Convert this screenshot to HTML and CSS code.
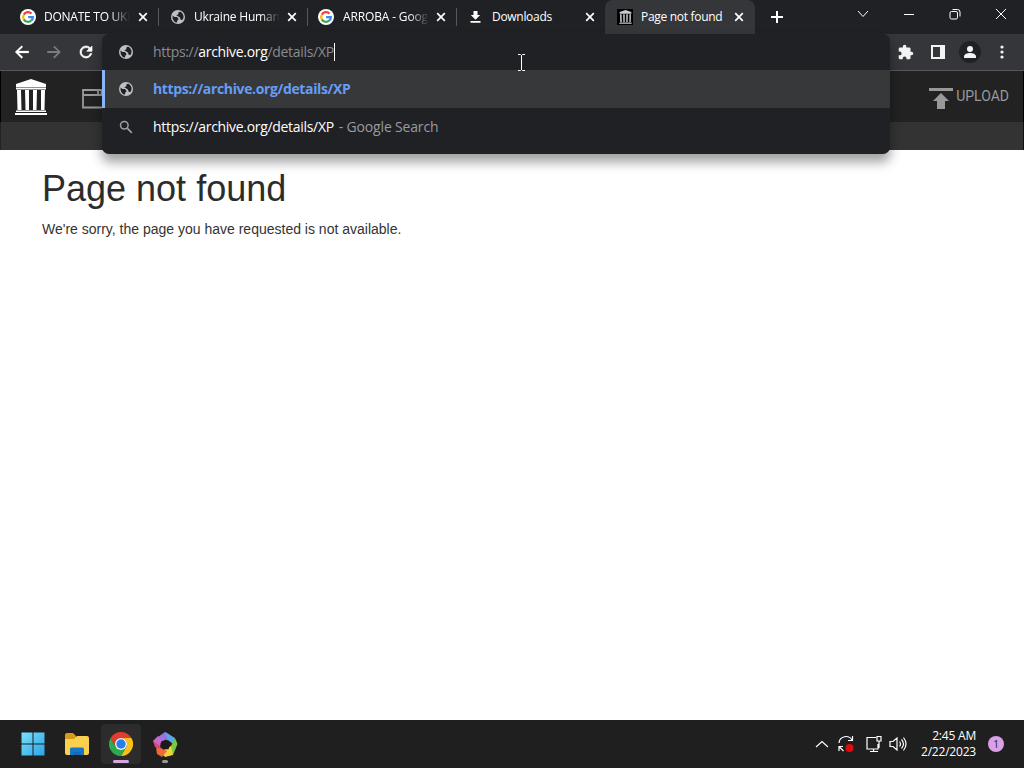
FILE: index.html
```html
<!DOCTYPE html>
<html lang="en">
<head>
    <meta charset="UTF-8">
    <title>Page not found</title>
    <link rel="stylesheet" href="styles.css">
</head>
<body>
    <svg class="defs" width="0" height="0">
        <symbol id="google" viewBox="0 0 16 16">
            <circle cx="8" cy="8" r="8" fill="#fff"/>
            <g fill="none" stroke-width="2.2">
                <path d="M3.800 5.600A4.900 4.900 0 0 1 11.500 4.600" stroke="#ea4335"/>
                <path d="M3.800 5.600a4.900 4.900 0 0 0 0 4.800" stroke="#fbbc05"/>
                <path d="M3.800 10.400a4.900 4.900 0 0 0 7.400 1.300" stroke="#34a853"/>
                <path d="M11.200 11.700A4.900 4.900 0 0 0 12.900 8.100H8.100" stroke="#4285f4"/>
            </g>
        </symbol>
        <symbol id="globe" viewBox="2 2 20 20">
            <circle cx="12" cy="12" r="10"/>
            <path d="M4.200 9.800L7 12h3.500l2 2v2l-1.500 1-.5 3C6.500 19.500 3.800 16 4.200 9.800zM9.500 9.500l3-1.500V5.500L15 4.200c3 1.300 5 4.300 5 7.800-.2 1.800-1 3.500-2 4.800l-2.500-1.300-.5-2.500-3-2z" fill="#202124"/>
        </symbol>
        <symbol id="close" viewBox="0 0 10 10">
            <path d="M1.200 1.200l7.600 7.600M8.800 1.200L1.200 8.800" fill="none" stroke="#fff" stroke-width="1.700"/>
        </symbol>
        <symbol id="temple" viewBox="0 0 32 36">
            <path d="M16 0L31 5v3H1V5zM1 8.500h30v2H1zM2 11h4l.5 20H2.500zM10 11h4v20h-3.500zM18 11h4l-.5 20H18zM26 11h4l-.5 20H26zM1 31.500h30V33H1zM0 34h32v2H0z"/>
        </symbol>
    </svg>

    <div class="tabs">
        <div class="tab">
            <svg class="favicon"><use href="#google"/></svg>
            <span class="title fade t-donate">DONATE TO UKR</span>
            <svg class="close"><use href="#close"/></svg>
        </div>
        <div class="tab">
            <svg class="favicon globe"><use href="#globe"/></svg>
            <span class="title fade t-ukraine">Ukraine Human</span>
            <svg class="close"><use href="#close"/></svg>
        </div>
        <div class="tab">
            <svg class="favicon"><use href="#google"/></svg>
            <span class="title fade t-arroba">ARROBA - Goog</span>
            <svg class="close"><use href="#close"/></svg>
        </div>
        <div class="tab no-line">
            <svg class="favicon" viewBox="0 0 16 16"><path d="M6.500 2h4v4h2.700L8.500 10.700 3.800 6h2.700zM3.500 12h10v1.800h-10z" fill="#fff"/></svg>
            <span class="title t-downloads">Downloads</span>
            <svg class="close"><use href="#close"/></svg>
        </div>
        <div class="tab active">
            <span class="favicon ia"><svg width="13" height="14"><use href="#temple"/></svg></span>
            <span class="title t-page">Page not found</span>
            <svg class="close"><use href="#close"/></svg>
        </div>
        <svg class="plus" width="12" height="12" viewBox="0 0 12 12"><path d="M6 0v12M0 6h12" stroke="#fff" stroke-width="2"/></svg>
        <div class="controls">
            <svg viewBox="0 0 12 12"><path d="M1 3l5 5.500L11 3"/></svg>
            <svg viewBox="0 0 12 12"><path d="M1 6.500h10"/></svg>
            <svg viewBox="0 0 12 12"><rect x="1" y="3.500" width="7.500" height="7.500" rx="1.500"/><path d="M3.500 1.500H8.500q2.500 0 2.500 2.500V8.500"/></svg>
            <svg viewBox="0 0 12 12"><path d="M1 1l10 10M11 1L1 11"/></svg>
        </div>
    </div>

    <div class="toolbar">
        <div class="nav">
            <svg viewBox="0 0 24 24"><path d="M21 10.800H7.300l5.800-5.600L11.500 3.500 2.800 12l8.700 8.500 1.600-1.700L7.300 13.200H21z" fill="#fff" stroke="#fff" stroke-width=".4"/></svg>
            <svg viewBox="0 0 24 24"><path d="M3 10.800h13.700l-5.800-5.600 1.600-1.700 8.700 8.500-8.700 8.500-1.600-1.700 5.800-5.600H3z" fill="#7b7c7f"/></svg>
            <svg viewBox="0 0 24 24"><path d="M17.650 6.350A8 8 0 1 0 19.730 14h-2.080A6 6 0 1 1 12 6c1.660 0 3.140.690 4.220 1.780L13 11h7V4z" fill="#fff" stroke="#fff" stroke-width=".9"/></svg>
        </div>
        <div class="actions">
            <svg width="16" height="16" viewBox="1 0 23 23"><path d="M20.500 11H19V7a2 2 0 0 0-2-2h-4V3.500a2.500 2.500 0 0 0-5 0V5H4a2 2 0 0 0-2 2v3.800h1.500a2.700 2.700 0 0 1 0 5.400H2V20a2 2 0 0 0 2 2h3.800v-1.500a2.700 2.700 0 0 1 5.400 0V22H17a2 2 0 0 0 2-2v-4h1.500a2.500 2.500 0 0 0 0-5z"/></svg>
            <svg class="panel" width="14" height="14" viewBox="0 0 14 14"><path d="M0 0h14v14H0zM2 2v10h7V2z" fill-rule="evenodd"/></svg>
            <svg class="avatar" width="22" height="22" viewBox="0 0 22 22"><circle cx="11" cy="11" r="11" fill="#202124"/><circle cx="11" cy="8" r="3"/><path d="M5 17v-1.500C5 13 8.500 12 11 12s6 1 6 3.500V17z"/></svg>
            <svg width="4" height="14" viewBox="0 0 4 14"><circle cx="2" cy="2" r="1.600"/><circle cx="2" cy="7" r="1.600"/><circle cx="2" cy="12" r="1.600"/></svg>
        </div>
    </div>

    <div class="page">
        <div class="topnav">
            <svg class="logo" width="32" height="36" fill="#fff"><use href="#temple"/></svg>
            <svg class="web" width="24" height="20" viewBox="0 0 24 20"><path d="M1 1h22v17.500H1zM1 6h22M16 1v5M19.500 1v5" fill="none" stroke="#999" stroke-width="1.800"/></svg>
            <a class="upload">
                <svg width="24" height="21" viewBox="0 0 24 21"><path d="M0 0h24v3H0zM12 5l8 8h-4v8H8v-8H4z" fill="#999"/></svg>
                <span>UPLOAD</span>
            </a>
        </div>
        <div class="subnav"></div>
        <main>
            <h1>Page not found</h1>
            <p>We're sorry, the page you have requested is not available.</p>
        </main>
    </div>

    <div class="omnibox">
        <div class="row input">
            <svg class="row-icon"><use href="#globe"/></svg>
            <span class="url">https://<b>archive.org</b>/details/XP</span><i class="caret"></i>
        </div>
        <div class="row selected">
            <svg class="row-icon"><use href="#globe"/></svg>
            <span class="match">https://archive.org/details/XP</span>
        </div>
        <div class="row">
            <svg class="row-icon" viewBox="0 0 14 14"><circle cx="5.300" cy="5.300" r="3.800" fill="none" stroke="#9aa0a6" stroke-width="1.500"/><path d="M8.200 8.200l4.600 4.600" stroke="#9aa0a6" stroke-width="1.700"/></svg>
            <span class="query">https://archive.org/details/XP</span><span class="hint">- Google Search</span>
        </div>
    </div>
    <svg class="cursor" width="9" height="17" viewBox="0 0 9 17"><path d="M1 .5h2.500l1 1 1-1H8M4.500 1v15M1 16.500h2.500l1-1 1 1H8" fill="none" stroke="#fff"/></svg>

    <div class="taskbar">
        <div class="apps">
            <div class="app">
                <svg width="24" height="24" viewBox="0 0 24 24"><defs><linearGradient id="win" x2="1" y2="1"><stop stop-color="#7be0fb"/><stop offset="1" stop-color="#2aa3e8"/></linearGradient></defs><path d="M.5.500h11v11H.5zM12.500.500h11v11h-11zM.5 12.500h11v11H.5zM12.500 12.500h11v11h-11z" fill="url(#win)"/></svg>
            </div>
            <div class="app">
                <svg width="26" height="24" viewBox="0 0 26 24"><path d="M1 3q0-2 2-2h6l3 3v5H1z" fill="#d99a17"/><path d="M1 7h9l3-3h10q2 0 2 2v15q0 2-2 2H3q-2 0-2-2z" fill="#fbd04f"/><path d="M6 23v-6q0-1.500 1.500-1.500h11q1.500 0 1.500 1.500v6z" fill="#1976c5"/><path d="M9 23v-3h8v3z" fill="#146ab4"/></svg>
            </div>
            <div class="app open">
                <svg width="24" height="24" viewBox="0 0 24 24"><path d="M1.600 6A12 12 0 0 1 22.400 6H12a6 6 0 0 0-5.200 9z" fill="#e33b2e"/><path d="M22.400 6A12 12 0 0 1 12 24l5.200-9A6 6 0 0 0 12 6z" fill="#fbc116"/><path d="M12 24A12 12 0 0 1 1.600 6l5.200 9a6 6 0 0 0 10.400 0z" fill="#2da94f"/><circle cx="12" cy="12" r="6" fill="#fff"/><circle cx="12" cy="12" r="4.700" fill="#2b7de9"/></svg>
            </div>
            <div class="app running">
                <svg width="25" height="25" viewBox="0 0 25 25"><path d="M12 0l5 3-1 5-7 1-4-4z" fill="#9a73df"/><path d="M12 0l10 6-2 6-5-4z" fill="#59a9e5"/><path d="M22 6l2.500 6L20 23l-3-7z" fill="#79c842"/><path d="M18 14l2 9-8 2-5-5z" fill="#efd33c"/><path d="M14 19l-5 6-5-3-1-7 5 1z" fill="#ee6a37"/><path d="M8 17l-6-2-2-6 5-2z" fill="#dc4775"/><path d="M5 4l4 4-2 6-7-5z" fill="#c76bc9"/><path d="M12.500 7.500l5 3.800-2 6h-6l-2-6z" fill="#1b1b1b"/></svg>
            </div>
        </div>
        <div class="tray">
            <svg class="chevron" width="14" height="8" viewBox="0 0 14 8"><path d="M1 7l6-5.500L13 7"/></svg>
            <svg class="sync" width="18" height="18" viewBox="0 0 18 18"><path d="M2 8a7 7 0 0 1 13-3M15.500 1v4.500H11M2 16v-4.500h4M2.500 12l4 4"/><circle cx="12.500" cy="13" r="4" fill="#e00b0b" stroke="none"/></svg>
            <svg class="network" width="18" height="18" viewBox="0 0 18 18"><path d="M11 2.500H2v11.500h11V9M5 16.500h8M8.500 14v2.500M12 1.500h4v4.500h-4zM14 6v7"/></svg>
            <svg class="sound" width="18" height="16" viewBox="0 0 18 16"><path d="M1 5.500h3l4-3.500v12l-4-3.500H1zM10.500 5.500q2 2.500 0 5M12.500 3.500q4 4.500 0 9M14.500 1.500q5 6.500 0 13"/></svg>
            <div class="clock">
                <div class="time">2:45 AM</div>
                <div class="date">2/22/2023</div>
            </div>
            <span class="badge">1</span>
        </div>
    </div>
</body>
</html>
```
FILE: styles.css
```css
* {
    box-sizing: border-box;
}
body {
    margin: 0;
    width: 1024px;
    height: 768px;
    display: flex;
    flex-direction: column;
    overflow: hidden;
    background: #fff;
    font-family: "Open Sans", sans-serif;
}
svg {
    display: block;
    flex: none;
}
.defs {
    position: absolute;
}

/* tab strip */
.tabs {
    display: flex;
    align-items: center;
    height: 34px;
    flex: none;
    padding-left: 10px;
    background: #202124;
}
.tab {
    display: flex;
    align-items: center;
    width: 149px;
    height: 18px;
    padding: 0 10px;
    border-right: 1px solid #56575a;
    color: #fff;
    font-size: 12px;
    white-space: nowrap;
}
.tab.no-line {
    border-color: transparent;
}
.tab.active {
    height: 34px;
    width: 150px;
    margin-left: -1px;
    padding: 0 11px 0 12px;
    border: 0;
    border-radius: 8px 8px 0 0;
    background: #35363a;
}
.favicon {
    width: 16px;
    height: 16px;
    margin-right: 8px;
    flex: none;
}
.globe {
    width: 14px;
    height: 14px;
    margin: 0 9px 0 2px;
    fill: #bdc1c6;
}
.ia {
    display: flex;
    align-items: center;
    justify-content: center;
    background: #000;
    fill: #ccc;
}
.title {
    margin-top: -1px;
}
.fade {
    -webkit-mask-image: linear-gradient(to right, #000 66px, transparent 86px);
    mask-image: linear-gradient(to right, #000 66px, transparent 86px);
}
.t-donate { letter-spacing: -0.25px; }
.t-ukraine { letter-spacing: -0.2px; }
.t-arroba { letter-spacing: -0.15px; margin-left: 1px; }
.t-downloads { letter-spacing: -0.3px; margin-left: 1px; }
.t-page { letter-spacing: -0.3px; }
.close {
    width: 10px;
    height: 10px;
    margin-left: auto;
}
.plus {
    margin-left: 16px;
}
.controls {
    display: flex;
    gap: 34px;
    margin: 0 17px 6px auto;
}
.controls svg {
    width: 12px;
    height: 12px;
    fill: none;
    stroke: #fff;
}

/* toolbar */
.toolbar {
    display: flex;
    align-items: center;
    justify-content: space-between;
    height: 37px;
    flex: none;
    padding: 0 20px 0 13px;
    background: #35363a;
    border-bottom: 1px solid #57585b;
}
.nav {
    display: flex;
    gap: 14px;
}
.nav svg {
    width: 18px;
    height: 18px;
}
.actions {
    display: flex;
    align-items: center;
    fill: #f1f3f4;
}
.actions .panel {
    margin-left: 17px;
}
.actions .avatar {
    margin-left: 14px;
}
.actions svg:last-child {
    margin-left: 19px;
}

/* site */
.page {
    flex: 1;
    font-family: "Liberation Sans", Arial, sans-serif;
}
.topnav {
    display: flex;
    align-items: center;
    height: 51px;
    padding: 0 14px;
    background: #222;
    border-left: 1px solid #000;
    border-right: 1px solid #000;
}
.web {
    margin: 4px 0 0 35px;
}
.upload {
    display: flex;
    margin: 3px 0 0 auto;
    color: #999;
    font-family: Roboto, sans-serif;
    font-size: 14px;
}
.upload span {
    margin: 1px 0 0 3px;
}
.upload svg {
    margin-top: 1px;
}
.subnav {
    height: 28px;
    background: #333;
    border-left: 1px solid #222;
    border-right: 1px solid #111;
}
main {
    padding: 19px 42px 0;
    color: #333;
    font-size: 14px;
    line-height: 20px;
}
h1 {
    margin: 0 0 10px;
    color: #2c2c2c;
    font-size: 36px;
    font-weight: normal;
    line-height: 40px;
}
p {
    margin: 0;
}

/* address suggestions, drawn over the page */
.omnibox {
    position: absolute;
    left: 102px;
    top: 34px;
    width: 788px;
    height: 120px;
    background: #202124;
    border-radius: 7px;
    box-shadow: 0 8px 12px rgba(0, 0, 0, 0.38);
    font-size: 14px;
    white-space: nowrap;
}
.row {
    display: flex;
    align-items: center;
    height: 38px;
    padding-left: 17px;
}
.row.input {
    height: 36px;
}
.row.selected {
    padding-left: 14px;
    background: #37383a;
    border-left: 3px solid #8ab4f8;
}
.row-icon {
    width: 14px;
    height: 14px;
    margin-right: 20px;
    fill: #bdc1c6;
}
.row span {
    margin-top: -1px;
}
.url {
    color: #888b8f;
    letter-spacing: -0.31px;
}
.url b {
    color: #fff;
    font-weight: normal;
}
.caret {
    width: 1px;
    height: 18px;
    background: #fff;
}
.match {
    color: #669df6;
    font-weight: bold;
    letter-spacing: -0.36px;
}
.query {
    color: #fff;
    letter-spacing: -0.31px;
}
.hint {
    margin-left: 5px;
    color: #969ba1;
    letter-spacing: -0.17px;
}
.cursor {
    position: absolute;
    left: 517px;
    top: 54px;
}

/* taskbar */
.taskbar {
    display: flex;
    align-items: center;
    justify-content: space-between;
    height: 48px;
    flex: none;
    padding: 0 20px 0 13px;
    background: #1f1f1f;
    color: #fff;
}
.apps {
    display: flex;
    gap: 4px;
}
.app {
    position: relative;
    display: flex;
    align-items: center;
    justify-content: center;
    width: 40px;
    height: 40px;
    border-radius: 4px;
}
.app.open {
    background: #2c2c2c;
}
.app.open::after,
.app.running::after {
    content: "";
    position: absolute;
    bottom: 1px;
    width: 16px;
    height: 3px;
    border-radius: 2px;
    background: #d9a5df;
}
.app.running::after {
    width: 6px;
    background: #999;
}
.tray {
    display: flex;
    align-items: center;
    fill: none;
    stroke: #fff;
    stroke-width: 1.2;
}
.sync {
    margin-left: 8px;
}
.network {
    margin-left: 10px;
}
.sound {
    margin-left: 6px;
}
.clock {
    width: 69px;
    font-size: 12px;
    line-height: 16px;
    text-align: right;
    letter-spacing: -0.2px;
    white-space: nowrap;
}
.badge {
    width: 16px;
    height: 16px;
    margin-left: 12px;
    border-radius: 50%;
    background: #d9a0e6;
    color: #222;
    font-size: 10px;
    line-height: 16px;
    text-align: center;
}
```
